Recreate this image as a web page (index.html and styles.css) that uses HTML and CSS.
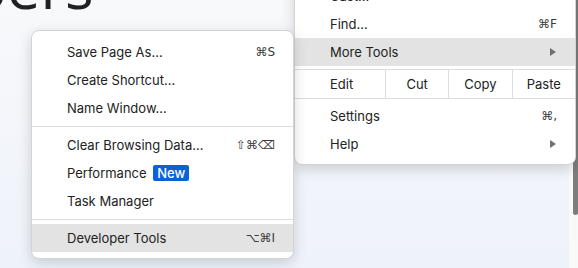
FILE: index.html
```html
<!DOCTYPE html>
<html lang="en">

<head>
    <meta charset="UTF-8" />
    <title>Chrome menu - More Tools</title>
    <link rel="stylesheet" href="styles.css">
</head>

<body>
    <!-- Page behind the menus -->
    <div class="page">
        <h1 class="hero">Developers</h1>
    </div>
    <div class="scrollbar"><div class="thumb"></div></div>

    <!-- Main browser menu -->
    <div class="menu menu-main">
        <div class="item"><span>Cast…</span></div>
        <div class="item"><span>Find…</span><span class="key">⌘F</span></div>
        <div class="item hover"><span>More Tools</span><span class="arrow"></span></div>
        <div class="edit-row">
            <div class="cell cell-label">Edit</div>
            <div class="cell">Cut</div>
            <div class="cell">Copy</div>
            <div class="cell">Paste</div>
        </div>
        <div class="item"><span>Settings</span><span class="key">⌘,</span></div>
        <div class="item"><span>Help</span><span class="arrow"></span></div>
    </div>

    <!-- More Tools submenu -->
    <div class="menu menu-sub">
        <div class="item"><span>Save Page As…</span><span class="key">⌘S</span></div>
        <div class="item"><span>Create Shortcut…</span></div>
        <div class="item"><span>Name Window…</span></div>
        <div class="sep"></div>
        <div class="item"><span>Clear Browsing Data…</span><span class="key">⇧⌘⌫</span></div>
        <div class="item"><span>Performance <span class="badge">New</span></span></div>
        <div class="item"><span>Task Manager</span></div>
        <div class="sep"></div>
        <div class="item hover"><span>Developer Tools</span><span class="key">⌥⌘I</span></div>
    </div>
</body>

</html>
```

FILE: styles.css
```css
* {
    box-sizing: border-box;
    margin: 0;
    padding: 0;
}

body {
    position: relative;
    width: 578px;
    height: 268px;
    overflow: hidden;
    font-family: Inter, "Noto Sans", "DejaVu Sans", sans-serif;
    font-size: 13px;
    color: #222;
    background: linear-gradient(180deg, #f8f9fb 0%, #eef2fa 100%);
}

.page {
    height: 100%;
}

.hero {
    margin-top: -46px;
    margin-left: -222px;
    font-size: 60px;
    font-weight: 400;
    line-height: 64px;
    color: #202124;
    font-family: "Open Sans", Roboto, sans-serif;
}

.scrollbar {
    position: absolute;
    top: 0;
    right: 0;
    width: 9px;
    height: 100%;
    background: #f9f9f9;
}

.thumb {
    width: 5px;
    height: 215px;
    margin-left: 4px;
    background: #7d7d7d;
    border-radius: 0 0 3px 3px;
}

/* Menus */
.menu {
    position: absolute;
    background: #fff;
    border: 1px solid #d4d4d4;
    border-radius: 8px;
    box-shadow: 0 4px 14px rgba(0, 0, 0, 0.16);
    padding: 7px 0 6px;
}

.menu-main {
    left: 294px;
    top: -26px;
    width: 282px;
}

.menu-sub {
    left: 31px;
    top: 30px;
    width: 263px;
    z-index: 2;
}

.item {
    display: flex;
    justify-content: space-between;
    align-items: center;
    height: 28px;
    padding: 0 18px 0 35px;
}

.item.hover {
    background: #e3e3e3;
}

.key {
    color: #3a3a3a;
    font-family: "DejaVu Sans", sans-serif;
    font-size: 12px;
}

.arrow {
    width: 0;
    height: 0;
    margin-right: 1px;
    border-top: 4px solid transparent;
    border-bottom: 4px solid transparent;
    border-left: 6px solid #707070;
}

.sep {
    height: 1px;
    margin: 4px 0;
    background: #dcdcdc;
}

.badge {
    display: inline-block;
    margin-left: 3px;
    padding: 0 4px;
    height: 16px;
    line-height: 16px;
    background: #0b62d6;
    color: #fff;
    font-weight: 500;
    border-radius: 2px;
}

.edit-row {
    display: grid;
    grid-template-columns: 90px 1fr 1fr 1fr;
    height: 30px;
    margin: 3px 0;
    border-top: 1px solid #dcdcdc;
    border-bottom: 1px solid #dcdcdc;
}

.cell {
    display: flex;
    align-items: center;
    justify-content: center;
    border-left: 1px solid #dcdcdc;
}

.cell-label {
    justify-content: flex-start;
    padding-left: 35px;
    border-left: none;
}
```
